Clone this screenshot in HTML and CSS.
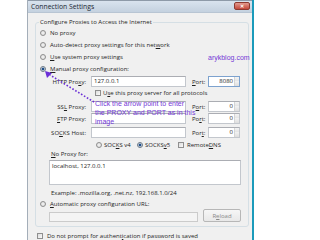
FILE: index.html
```html
<!DOCTYPE html>
<html>
<head>
<meta charset="utf-8">
<link rel="stylesheet" href="styles.css">
</head>
<body>
<div class="win">
  <div class="titlebar">
    <span class="title">Connection Settings</span>
    <span class="close">✕</span>
  </div>
  <div class="body">
    <fieldset class="group">
      <legend>Configure Proxies to Access the Internet</legend>
      <div class="opt first"><span class="radio"></span>No proxy</div>
      <div class="opt"><span class="radio"></span>Auto-detect proxy settings for this net<u>w</u>ork</div>
      <div class="opt"><span class="radio"></span><u>U</u>se system proxy settings</div>
      <div class="opt"><span class="radio on"></span><u>M</u>anual proxy configuration:</div>

      <div class="prow r-http">
        <span class="plabel">HTTP Pro<u>x</u>y:</span>
        <span class="field">127.0.0.1</span>
        <span class="portl"><u>P</u>ort:</span>
        <span class="port focus">8080<span class="spin"></span></span>
      </div>
      <div class="chkrow"><span class="check"></span>U<u>s</u>e this proxy server for all protocols</div>
      <div class="prow r-ssl">
        <span class="plabel">SS<u>L</u> Proxy:</span>
        <span class="field"></span>
        <span class="portl">P<u>o</u>rt:</span>
        <span class="port">0<span class="spin"></span></span>
      </div>
      <div class="prow r-ftp">
        <span class="plabel"><u>F</u>TP Proxy:</span>
        <span class="field"></span>
        <span class="portl">Po<u>r</u>t:</span>
        <span class="port">0<span class="spin"></span></span>
      </div>
      <div class="prow r-socks">
        <span class="plabel">SO<u>C</u>KS Host:</span>
        <span class="field"></span>
        <span class="portl">Por<u>t</u>:</span>
        <span class="port">0<span class="spin"></span></span>
      </div>
      <div class="vrow">
        <span class="vopt v4"><span class="radio"></span>SOC<u>K</u>S v4</span>
        <span class="vopt v5"><span class="radio on"></span>SOCKS <u>v</u>5</span>
        <span class="vopt dns"><span class="check"></span>Remote <u>D</u>NS</span>
      </div>
      <div class="nplabel"><u>N</u>o Proxy for:</div>
      <div class="area">localhost, 127.0.0.1</div>
      <div class="example">Example: .mozilla.org, .net.nz, 192.168.1.0/24</div>
      <div class="opt auto"><span class="radio"></span><u>A</u>utomatic proxy configuration URL:</div>
      <div class="urlrow">
        <span class="url"></span>
        <span class="btn">R<u>e</u>load</span>
      </div>
    </fieldset>
    <div class="chkrow bottom"><span class="check"></span>Do not prompt for authent<u>i</u>cation if password is saved</div>
  </div>
</div>

<div class="brand">arykblog.com</div>
<div class="note">Click the arrow point to enter<br>the PROXY and PORT as in this<br>image</div>
<svg class="arrow" width="320" height="240" viewBox="0 0 320 240">
  <line x1="94" y1="102" x2="50" y2="75" stroke="#6b2fd6" stroke-width="1.6" stroke-dasharray="1.6 1.8"/>
  <polygon points="45,71 52,73 47,78" fill="#6b2fd6"/>
</svg>
</body>
</html>
```

FILE: styles.css
```css
* { box-sizing: border-box; }
html, body { margin: 0; padding: 0; }
body {
  width: 320px;
  height: 240px;
  overflow: hidden;
  background: #ffffff;
  position: relative;
  font-family: "Open Sans", "Noto Sans", sans-serif;
  font-size: 6px;
  color: #1e1e1e;
}
u { text-decoration: underline; text-underline-offset: 1px; }

.win {
  margin-left: 27px;
  width: 227px;
  height: 240px;
  background: #f0f0f0;
  border-left: 1px solid #a4aeb9;
  border-right: 2px solid #1b9bbb;
  display: flex;
  flex-direction: column;
}
.titlebar {
  height: 13px;
  flex: none;
  background: linear-gradient(#d9e3ee, #c4d1df);
  border-top: 1px solid #8e9aa8;
  border-bottom: 1px solid #b8c5d3;
  display: flex;
  align-items: center;
  justify-content: space-between;
  padding: 0 2px 0 3px;
}
.title { font-size: 6.8px; color: #1c2733; }
.close {
  width: 16px;
  height: 8px;
  margin-top: -1px;
  background: linear-gradient(#e39a8e, #c4493b);
  border: 1px solid #8d3a31;
  border-radius: 2px;
  color: #fff;
  font-size: 5px;
  font-weight: bold;
  display: flex;
  align-items: center;
  justify-content: center;
}
.body { padding: 5px 3px 0 7px; }

.group {
  margin: 0;
  padding: 0 0 4px 4px;
  width: 214px;
  border: 1px solid #d5dfe5;
  border-radius: 3px;
}
.group legend {
  padding: 0 1px;
  margin-left: -1px;
  line-height: 8px;
  color: #1e1e1e;
}

.opt { display: flex; align-items: center; height: 12px; }
.opt.first { margin-top: 1px; }
.radio {
  width: 6px;
  height: 6px;
  flex: none;
  border-radius: 50%;
  border: 1px solid #8f8f8f;
  background: radial-gradient(circle, #f4f4f4 0%, #d8d8d8 100%);
  margin-right: 4px;
}
.radio.on { border-color: #6d7a86; background: radial-gradient(circle, #1f4f8a 0 45%, #e3e8ee 60%); }

.check {
  width: 6px;
  height: 6px;
  flex: none;
  border: 1px solid #8f8f8f;
  background: linear-gradient(135deg, #dcdcdc, #fafafa);
  margin-right: 2px;
}

.prow { display: flex; align-items: center; height: 11px; margin-left: 4px; }
.r-http { margin-top: 1px; }
.r-ssl { margin-top: 2px; }
.r-ftp { margin-top: 1px; }
.r-socks { margin-top: 3px; }
.plabel { width: 42px; text-align: right; margin-right: 5px; }
.field {
  width: 95px;
  height: 11px;
  background: #fff;
  border: 1px solid #c3c7cd;
  border-top-color: #abadb3;
  padding-left: 2px;
  line-height: 9px;
}
.portl { width: 14px; margin-left: 6px; margin-right: 2px; }
.port {
  width: 32px;
  height: 11px;
  background: #fff;
  border: 1px solid #c3c7cd;
  border-top-color: #abadb3;
  text-align: right;
  padding-right: 6px;
  line-height: 9px;
  position: relative;
}
.port.focus { border-color: #7da2ce; }
.spin {
  position: absolute;
  right: 0;
  top: 0;
  width: 5px;
  height: 9px;
  border-left: 1px solid #d5d5d5;
  background:
    linear-gradient(#f4f4f4, #e2e2e2) top / 100% 50% no-repeat,
    linear-gradient(#eeeeee, #dcdcdc) bottom / 100% 50% no-repeat;
}

.chkrow { display: flex; align-items: center; height: 12px; }
.group .chkrow { margin-left: 55px; }

.vrow { display: flex; align-items: center; height: 10px; margin-top: 2px; margin-left: 56px; }
.vopt { display: flex; align-items: center; }
.vopt .radio { margin-right: 2px; }
.v4 { width: 41px; }
.v5 { width: 41px; }
.dns .check { margin-right: 3px; }

.nplabel { height: 8px; line-height: 8px; margin-left: 11px; }
.area {
  margin: 2px 0 0 9px;
  width: 192px;
  height: 25px;
  background: #fff;
  border: 1px solid #c3c7cd;
  border-top-color: #abadb3;
  padding: 2px 2px;
  line-height: 7px;
}
.example { height: 10px; line-height: 10px; margin: 3px 0 0 11px; }
.opt.auto { height: 11px; }
.urlrow { display: flex; align-items: center; height: 13px; margin-left: 9px; }
.url {
  width: 149px;
  height: 10px;
  margin-top: 2px;
  background: #f4f4f4;
  border: 1px solid #cbcbcb;
}
.btn {
  width: 38px;
  height: 13px;
  margin-left: 5px;
  border: 1px solid #b7b7b7;
  border-radius: 2px;
  background: linear-gradient(#f6f6f6, #e8e8e8);
  color: #8a8a8a;
  display: flex;
  align-items: center;
  justify-content: center;
}
.chkrow.bottom { margin: 4px 0 0 2px; height: 10px; }
.chkrow.bottom .check { margin-right: 4px; }

.brand {
  position: absolute;
  left: 208px;
  top: 53px;
  font-family: "Liberation Sans", Arial, sans-serif;
  font-size: 7px;
  line-height: 9px;
  color: #7338d6;
}
.note {
  position: absolute;
  left: 95px;
  top: 99px;
  font-family: "Liberation Sans", Arial, sans-serif;
  font-size: 7px;
  line-height: 9px;
  color: #7338d6;
}
.arrow { position: absolute; left: 0; top: 0; pointer-events: none; }
```
